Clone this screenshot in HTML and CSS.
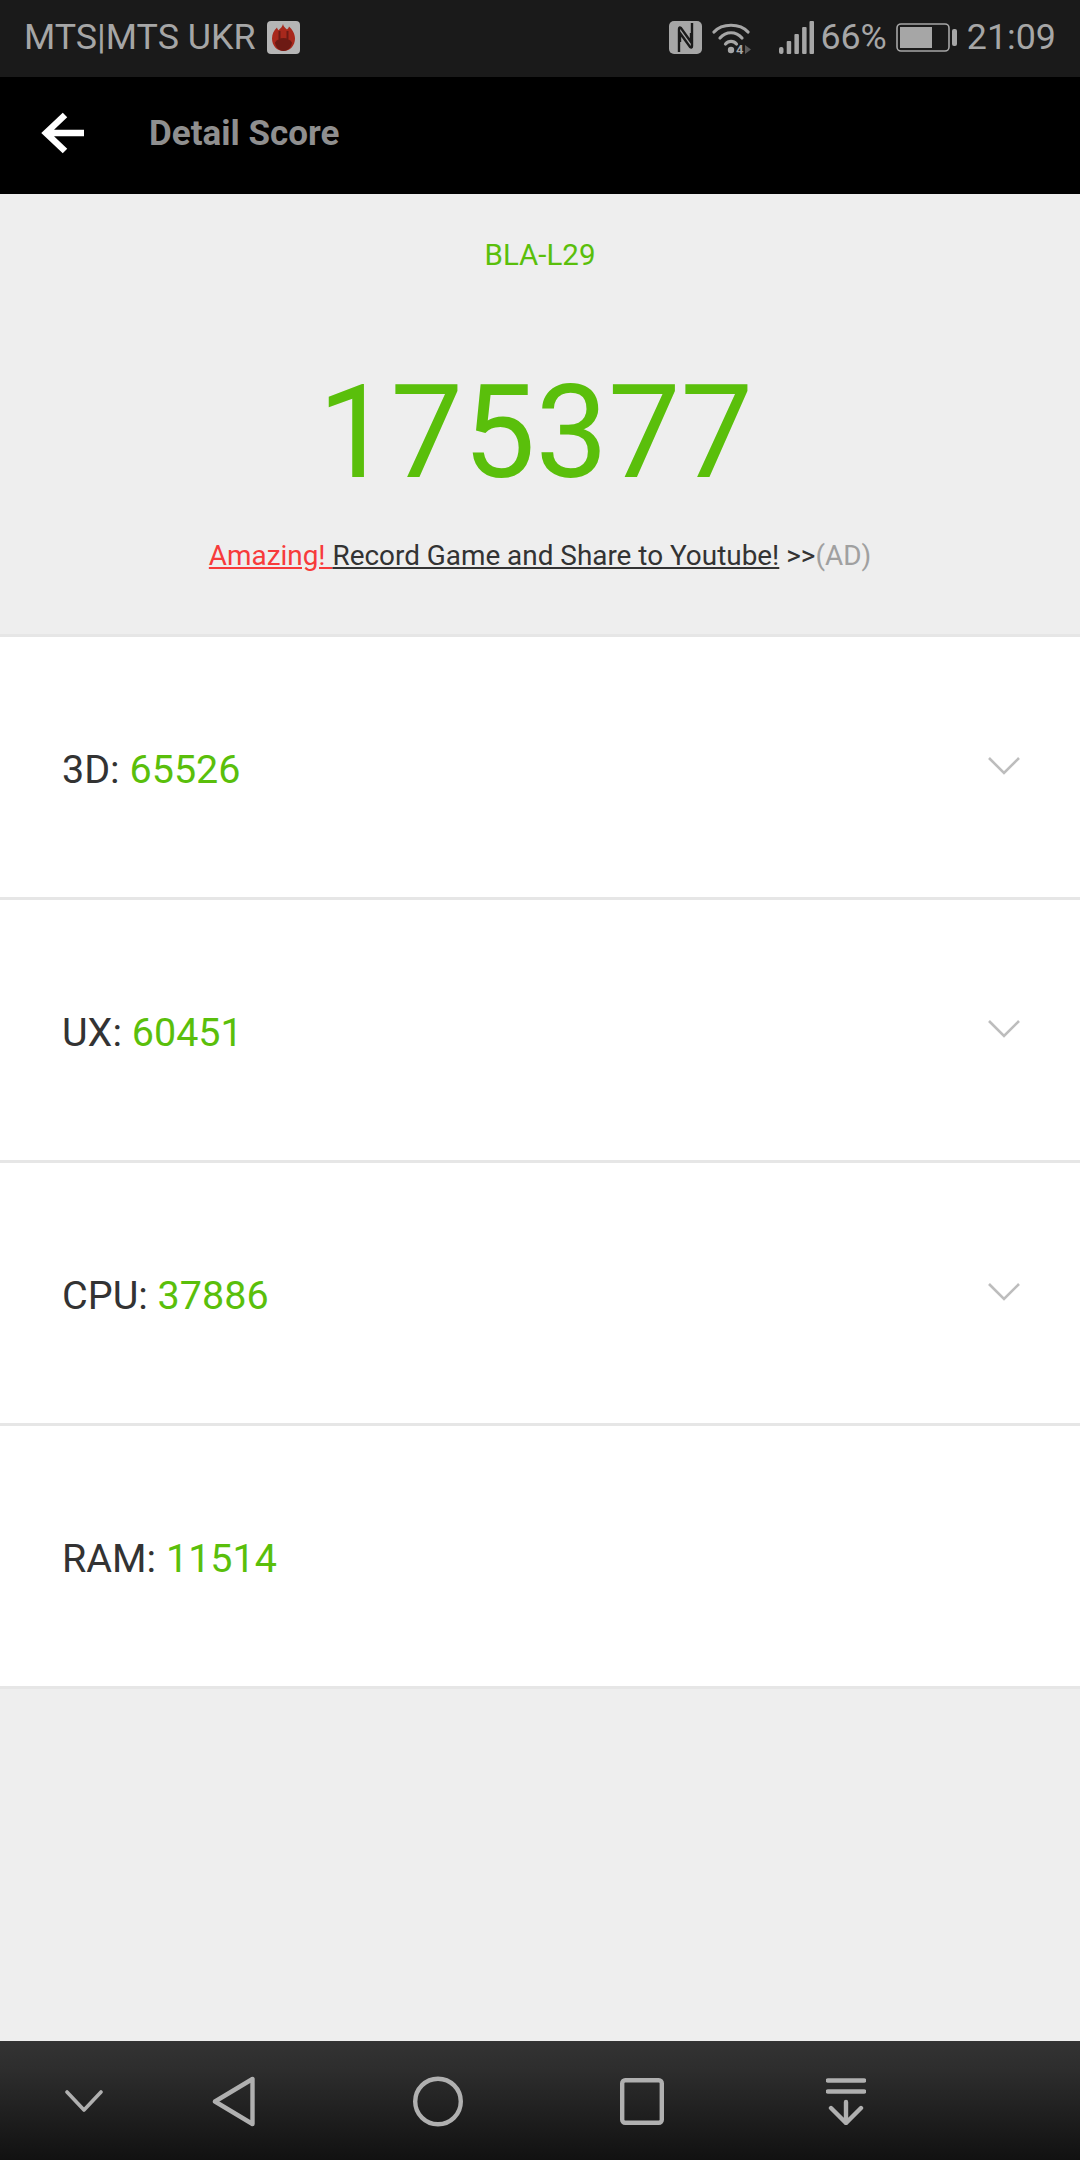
FILE: index.html
```html
<!DOCTYPE html>
<html lang="en">
<head>
<meta charset="utf-8">
<title>Detail Score</title>
<link rel="stylesheet" href="styles.css">
</head>
<body>
<div class="screen">
  <header class="status">
    <div class="status-left">
      <span class="carrier">MTS|MTS UKR</span>
      <svg class="app-icon" viewBox="0 0 33 33" width="33" height="33">
        <rect width="33" height="33" rx="4" fill="#b5b5b5"/>
        <path d="M16 3c.5 3 2.500 4 4 5.500c1-.8 1.800-1.800 2-3c3.500 3 6 7.500 6 12c0 7-5 12.500-11.500 12.500S5 24.500 5 17.500C5 13 7 9 10 6.500c.2 1.200.7 2 1.500 2.700C13.500 7.500 15.500 5.500 16 3z" fill="#a8281c"/>
        <path d="M8 21.500c2-3 5-4.500 8.500-4.500S23 18.500 25 21.500c-.5 4.500-4 8.500-8.500 8.500S8.500 26 8 21.500z" fill="#6d1a14"/>
        <path d="M12.500 10v8M20.500 10v8" stroke="#6d1a14" stroke-width="2" fill="none"/>
      </svg>
    </div>
    <div class="status-right">
      <svg class="nfc" viewBox="0 0 33 33" width="33" height="33">
        <rect width="33" height="33" rx="5" fill="#a6a6a6"/>
        <path d="M10 31V8q0-2.500 2-1l10 14v-9M23 2v23q0 2.500-2 1L11 12v9" fill="none" stroke="#1a1a1a" stroke-width="2.400"/>
      </svg>
      <svg class="wifi" viewBox="0 -4 40 41" width="40" height="41">
        <g fill="none" stroke="#a6a6a6" stroke-width="3.200" stroke-linecap="round">
          <path d="M2 11C10 2 28 2 36 11"/>
          <path d="M8 17C14 10 24 10 30 17"/>
          <path d="M13.500 23c3-3.500 8-3.500 11 0"/>
        </g>
        <circle cx="19" cy="29" r="3.200" fill="#a6a6a6"/>
        <text class="wifi-digit" x="24" y="33">4</text>
        <path d="M33 24l6 4.500l-6 4.500z" fill="#5c5c5c"/>
      </svg>
      <svg class="signal" viewBox="0 0 35 33" width="35" height="33">
        <g fill="#a6a6a6">
          <rect x="0" y="26" width="4.500" height="7" rx="2"/>
          <rect x="7.700" y="20" width="4.500" height="13" rx="1"/>
          <rect x="15.400" y="13" width="4.500" height="20" rx="1"/>
          <rect x="23.100" y="6" width="4.500" height="27" rx="1"/>
          <rect x="30.500" y="0" width="4.500" height="33" rx="1"/>
        </g>
      </svg>
      <span class="pct">66%</span>
      <svg class="battery" viewBox="0 0 61 29" width="61" height="29">
        <rect x="1" y="1" width="52" height="27" rx="4" fill="none" stroke="#a6a6a6" stroke-width="1.600"/>
        <rect x="4" y="4" width="32" height="21" fill="#a6a6a6"/>
        <rect x="56" y="6" width="5" height="17" rx="2" fill="#a6a6a6"/>
      </svg>
      <span class="clock">21:09</span>
    </div>
  </header>

  <div class="appbar">
    <svg class="back" viewBox="0 0 44 44" width="44" height="44">
      <path d="M43 22H6M24 4L5 22l19 18" fill="none" stroke="#fff" stroke-width="6.500"/>
    </svg>
    <h1 class="title">Detail Score</h1>
  </div>

  <section class="summary">
    <div class="device">BLA-L29</div>
    <div class="total">175377</div>
    <div class="promo"><a class="promo-red">Amazing! </a><a class="promo-dark">Record Game and Share to Youtube!</a> <span class="promo-arrows">&gt;&gt;</span><span class="promo-ad">(AD)</span></div>
  </section>

  <main class="rows">
    <div class="row"><span class="label">3D: <b>65526</b></span><svg class="chev" viewBox="0 0 32 18" width="32" height="18"><path d="M1 1l15 15L31 1" fill="none" stroke="#bdbdbd" stroke-width="2.600"/></svg></div>
    <div class="row"><span class="label">UX: <b>60451</b></span><svg class="chev" viewBox="0 0 32 18" width="32" height="18"><path d="M1 1l15 15L31 1" fill="none" stroke="#bdbdbd" stroke-width="2.600"/></svg></div>
    <div class="row"><span class="label">CPU: <b>37886</b></span><svg class="chev" viewBox="0 0 32 18" width="32" height="18"><path d="M1 1l15 15L31 1" fill="none" stroke="#bdbdbd" stroke-width="2.600"/></svg></div>
    <div class="row"><span class="label">RAM: <b>11514</b></span></div>
  </main>

  <div class="spacer"></div>

  <nav class="navbar">
    <svg class="nav-chev" viewBox="0 0 38 22" width="38" height="22"><path d="M2 2l17 18L36 2" fill="none" stroke="#b0b0b0" stroke-width="3.600" stroke-linecap="round" stroke-linejoin="round"/></svg>
    <svg class="nav-back" viewBox="0 0 43 51" width="43" height="51"><path d="M3 25.500L40.500 3v45z" fill="none" stroke="#b0b0b0" stroke-width="4.400" stroke-linejoin="round"/></svg>
    <svg class="nav-home" viewBox="0 0 50 51" width="50" height="51"><circle cx="25" cy="25.500" r="22.800" fill="none" stroke="#b0b0b0" stroke-width="4.400"/></svg>
    <svg class="nav-recent" viewBox="0 0 44 47" width="44" height="47"><rect x="2.200" y="2.200" width="39.600" height="42.600" rx="3" fill="none" stroke="#b0b0b0" stroke-width="4.400"/></svg>
    <svg class="nav-pull" viewBox="0 0 40 47" width="40" height="47"><path d="M2 2.500h36M2 13.500h36M20 24v21M5 30l15 15 15-15" fill="none" stroke="#b0b0b0" stroke-width="4.400" stroke-linecap="round"/></svg>
  </nav>
</div>
</body>
</html>
```

FILE: styles.css
```css
* { box-sizing: border-box; }
html, body { margin: 0; padding: 0; }
body { font-family: Roboto, "Liberation Sans", sans-serif; background: #eeeeee; }
.screen { width: 1080px; height: 2160px; display: flex; flex-direction: column; overflow: hidden; }

.status { height: 77px; background: #1a1a1a; display: flex; align-items: center; justify-content: space-between; padding: 0 24px 3px 24px; color: #a6a6a6; font-size: 35.800px; font-weight: 400; }
.status-left, .status-right { display: flex; align-items: center; }
.app-icon { margin-left: 11px; }
.nfc { margin-right: 10px; }
.wifi { margin-right: 27px; }
.signal { margin-right: 6px; }
.battery { margin: 0 10px 0 9px; }
.wifi-digit { font-family: Roboto, sans-serif; font-size: 13px; font-weight: 700; fill: #a6a6a6; }

.appbar { height: 117px; background: #000; display: flex; align-items: center; padding: 0 0 5px 41px; }
.back { flex: none; }
.title { margin: 0 0 0 64px; font-size: 35px; font-weight: 700; color: #8f8f8f; }

.summary { height: 440px; display: flex; flex-direction: column; align-items: center; background: #eeeeee; }
.device { margin-top: 44px; font-size: 29.500px; line-height: 34px; color: #5abf0b; }
.total { margin-top: 85px; margin-right: 9px; font-size: 129px; line-height: 152px; font-weight: 400; color: #5abf0b; }
.promo { margin-top: 30px; font-size: 27.900px; line-height: 34px; font-weight: 400; color: #333; white-space: pre; }
.promo-red { color: #f73b3b; text-decoration: underline; }
.promo-dark { color: #333; text-decoration: underline; }
.promo-ad { color: #a0a0a0; }

.rows { background: #fff; }
.row { height: 263px; border-top: 3px solid #e6e6e6; padding: 4px 60px 0 62px; display: flex; align-items: center; justify-content: space-between; }
.row:last-child { border-bottom: 3px solid #e6e6e6; height: 266px; }
.label { font-size: 39.500px; font-weight: 400; color: #333; padding-top: 1px; }
.label b { font-weight: 400; color: #5abf0b; }
.chev { margin-bottom: 6px; }

.spacer { flex: 1; background: #eeeeee; }

.navbar { height: 119px; background: linear-gradient(#333333, #2d2d2d 25%, #1c1c1c 70%, #111111); display: flex; align-items: center; padding: 1px 0 0 65px; }
.nav-back { margin-left: 109px; }
.nav-home { margin-left: 158px; }
.nav-recent { margin-left: 157px; }
.nav-pull { margin-left: 162px; }
```
